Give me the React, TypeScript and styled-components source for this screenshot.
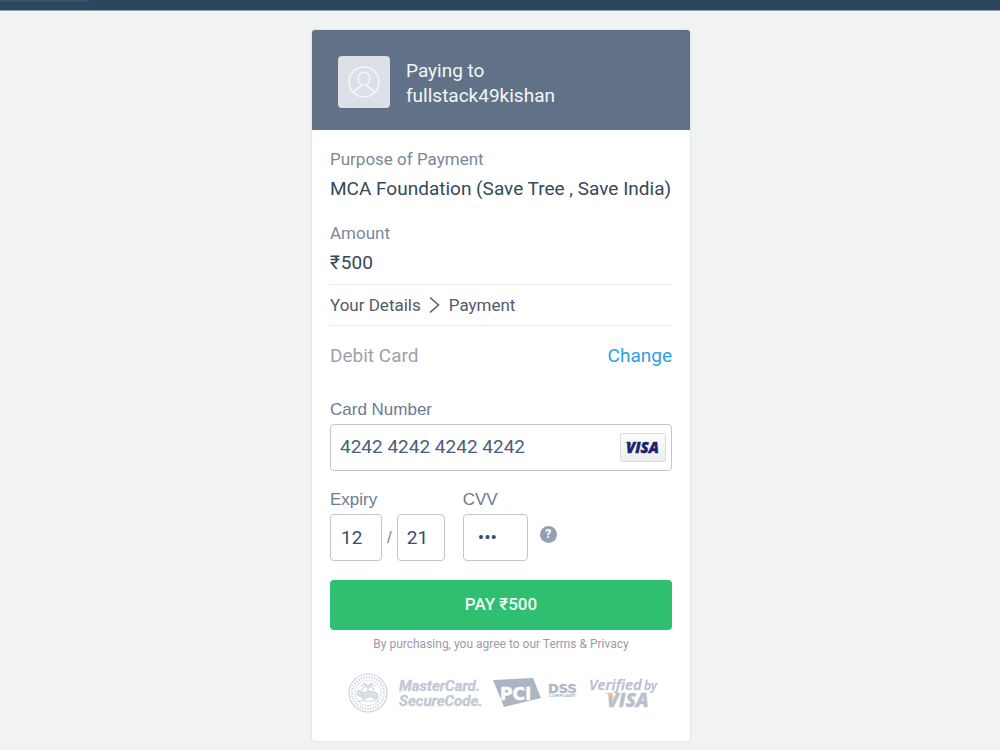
import React from "react";
import styled, { createGlobalStyle } from "styled-components";

const GlobalStyle = createGlobalStyle`
  * { box-sizing: border-box; }
  body {
    margin: 0;
    background: #f1f3f3;
    font-family: Roboto, "Liberation Sans", sans-serif;
    color: #33475b;
  }
`;

const TopBar = styled.header`
  height: 11px;
  background: #2d465d;
  border-bottom: 1px solid #8e9db0;
`;

const TopTab = styled.div`
  width: 90px;
  height: 2px;
  background: #35536c;
  border-radius: 0 0 2px 0;
`;

const Page = styled.main`
  display: flex;
  justify-content: center;
  padding: 19px 10px 8px 12px;
`;

const Card = styled.section`
  width: 100%;
  max-width: 378px;
  background: #fff;
  border-radius: 3px;
  box-shadow: 0 0 0 1px #dfe6f0;
`;

const Payee = styled.div`
  display: flex;
  align-items: center;
  gap: 16px;
  padding: 26px 26px 22px;
  background: #617288;
  border-radius: 3px 3px 0 0;
`;

const Avatar = styled.div`
  display: grid;
  place-items: center;
  width: 52px;
  height: 52px;
  background: #dcdfe5;
  border-radius: 4px;
`;

const PayeeName = styled.h1`
  margin: 0;
  padding-top: 2px;
  font-size: 19px;
  line-height: 25px;
  font-weight: 400;
  color: #f4f6f8;
`;

const Body = styled.form`
  display: flex;
  flex-direction: column;
  padding: 19px 18px 28px;
`;

const Summary = styled.dl`
  display: flex;
  flex-direction: column;
  gap: 22px;
  margin: 0;
  padding-bottom: 9px;
  border-bottom: 1px solid #eceff1;
`;

const Entry = styled.div`
  display: flex;
  flex-direction: column;
  gap: 8px;
`;

const Term = styled.dt`
  font-size: 17px;
  line-height: 20px;
  color: #7b8798;
`;

const Detail = styled.dd`
  margin: 0;
  font-size: 19px;
  line-height: 24px;
  color: #34495a;
`;

const Amount = styled(Detail)`
  display: flex;
  gap: 1px;
`;

const Steps = styled.nav`
  display: flex;
  align-items: center;
  gap: 7px;
  height: 41px;
  border-bottom: 1px solid #eceff1;
  font-size: 17px;
  line-height: 20px;
  color: #515a68;
`;

const Method = styled.div`
  display: flex;
  justify-content: space-between;
  margin: 18px 0 32px;
  font-size: 19px;
  line-height: 24px;
  color: #a09fae;
`;

const ChangeLink = styled.a`
  color: #2e9eea;
  text-decoration: none;
`;

const Field = styled.div`
  display: flex;
  flex-direction: column;
  gap: 4px;
`;

const Label = styled.label`
  font-family: "Liberation Sans", sans-serif;
  font-size: 17px;
  line-height: 20px;
  color: #6b7b91;
`;

const InputBox = styled.div`
  display: flex;
  align-items: center;
  height: 47px;
  padding-right: 5px;
  border: 1px solid #bcc6d6;
  border-radius: 4px;
`;

const CardInput = styled.input`
  flex: 1;
  min-width: 0;
  padding: 0 9px 2px;
  border: 0;
  outline: 0;
  background: none;
  font: 19px/24px Roboto, sans-serif;
  color: #48607a;
`;

const SmallInput = styled.input<{ $width: number; $inset: number }>`
  width: ${(p) => p.$width}px;
  height: 47px;
  padding: 0 0 1px ${(p) => p.$inset}px;
  border: 1px solid #bcc6d6;
  border-radius: 4px;
  outline: 0;
  background: #fff;
  font: 19px/24px Roboto, sans-serif;
  color: #34506a;
`;

const FieldRow = styled.div`
  display: flex;
  align-items: flex-end;
  margin: 19px 0 19px;
`;

const ExpiryInputs = styled.div`
  display: flex;
  align-items: center;
  gap: 5px;
  margin-right: 18px;
  font: 17px/20px "Liberation Sans", sans-serif;
  color: #7b8798;
`;

const HelpButton = styled.button`
  display: grid;
  place-items: center;
  width: 17px;
  height: 17px;
  margin: 0 0 18px 12px;
  padding: 0;
  border: 0;
  border-radius: 50%;
  background: #93a0b2;
  font: 700 12px/17px Roboto, sans-serif;
  color: #fff;
`;

const PayButton = styled.button`
  height: 50px;
  padding: 0 0 2px;
  border: 0;
  border-radius: 4px;
  background: #2fbf71;
  font: 500 17px/20px Roboto, sans-serif;
  color: #f2fbf6;
`;

const Terms = styled.p`
  margin: 6px 0 21px;
  font-size: 12px;
  line-height: 16px;
  text-align: center;
  color: #9b9aab;
`;

const Badges = styled.div`
  display: flex;
  align-items: center;
  justify-content: space-between;
  padding: 0 13px 0 18px;
`;

const AvatarIcon = () => (
  <svg width="32" height="32" viewBox="0 0 32 32" fill="none" stroke="#f6f8fa" strokeWidth="1.4">
    <circle cx="16" cy="16" r="15" />
    <ellipse cx="16" cy="12.8" rx="5.8" ry="6.6" />
    <path d="M5.500 26.500c1-3 5-4 8-6.800M26.500 26.500c-1-3-5-4-8-6.800" />
  </svg>
);

const Chevron = () => (
  <svg width="14" height="18" viewBox="0 0 14 18" fill="none" stroke="#515a68" strokeWidth="1.5">
    <path d="M2 1.500 10.500 9 2 16.500" />
  </svg>
);

const VisaMark = () => (
  <svg width="46" height="30" viewBox="0 0 46 30" role="img" aria-label="Visa">
    <defs>
      <linearGradient id="chip" x1="0" y1="0" x2="0" y2="1">
        <stop offset="0" stopColor="#fdfdfd" />
        <stop offset="1" stopColor="#eeeeee" />
      </linearGradient>
    </defs>
    <rect x=".5" y=".5" width="45" height="28" rx="1.500" fill="url(#chip)" stroke="#dddddd" />
    <text x="6" y="20" fontFamily="Open Sans, sans-serif" fontSize="15" fontWeight="800" fontStyle="italic" fill="#1d2170" stroke="#1d2170" strokeWidth=".4">
      VISA
    </text>
    <path d="M5 9h5l1.500 4C9.500 10.500 7.500 9.500 5 9.300z" fill="#1d2170" />
  </svg>
);

const BankSeal = () => (
  <svg width="40" height="40" viewBox="0 0 40 40" fill="none" stroke="#cdd3dc" role="img" aria-label="Reserve Bank seal">
    <circle cx="20" cy="20" r="19" strokeWidth="1.200" />
    <circle cx="20" cy="20" r="16" strokeWidth="2.400" strokeDasharray="1.200 1.500" />
    <circle cx="20" cy="20" r="13" strokeWidth=".7" />
    <path d="M20 22v-8M20 14c-2-3-5-3-7-1M20 14c2-3 5-3 7-1M20 14c-2-1-5 0-6 3M20 14c2-1 5 0 6 3M20 14c-1-2-2-3-4-4M20 14c1-2 2-3 4-4" strokeWidth="1.300" />
    <path d="M9 19c1-2 4-2 5 0l2 1c4-2 9-2 12 0 2 1 2 4 1 6h-3l-1-2h-6l-2 2h-3l1-3c-4 1-6-1-6-4z" fill="#dde1e8" strokeWidth="1.200" />
    <path d="M9 28h22M18 23h8M12 20h2" strokeWidth="1.200" />
  </svg>
);

const SecureCodeMark = () => (
  <svg width="84" height="36" viewBox="0 0 84 36" fill="#c1c8d4" stroke="#c1c8d4" strokeWidth=".3" fontFamily="Roboto, sans-serif" fontSize="15" fontWeight="700" fontStyle="italic">
    <text x="1" y="16">MasterCard.</text>
    <text x="1" y="31">SecureCode.</text>
  </svg>
);

const PciMark = () => (
  <svg width="86" height="32" viewBox="0 0 86 32">
    <path d="M0 3 40 1 48 21 11 30z" fill="#abb5c4" />
    <text x="7" y="23" fontFamily="DejaVu Sans, sans-serif" fontSize="17" fontWeight="700" fill="#fff" stroke="#fff" strokeWidth=".5">
      PCI
    </text>
    <g fill="#aeb8c6" fontFamily="DejaVu Sans, sans-serif" fontWeight="700">
      <text x="55" y="16" fontSize="13" stroke="#aeb8c6" strokeWidth=".4">DSS</text>
      <text x="56" y="20" fontSize="4">COMPLIANT</text>
    </g>
  </svg>
);

const VerifiedMark = () => (
  <svg width="70" height="38" viewBox="0 0 70 38" fontFamily="Open Sans, sans-serif" fontStyle="italic" fill="#b8c0cd" stroke="#b8c0cd" strokeWidth=".3">
    <text x="0" y="16" fontSize="15" fontWeight="600">Verified</text>
    <text x="55" y="16" fontSize="12" fontWeight="600">by</text>
    <text x="18" y="33" fontSize="19" fontWeight="800">VISA</text>
    <path d="M16 19h7l3 8c-3-4-5-7-10-7.500z" fill="#f3c877" stroke="none" />
  </svg>
);

export default function App() {
  return (
    <>
      <GlobalStyle />
      <TopBar>
        <TopTab />
      </TopBar>
      <Page>
        <Card>
          <Payee>
            <Avatar>
              <AvatarIcon />
            </Avatar>
            <PayeeName>
              Paying to
              <br />
              fullstack49kishan
            </PayeeName>
          </Payee>
          <Body onSubmit={(e) => e.preventDefault()}>
            <Summary>
              <Entry>
                <Term>Purpose of Payment</Term>
                <Detail>MCA Foundation (Save Tree , Save India)</Detail>
              </Entry>
              <Entry>
                <Term>Amount</Term>
                <Amount>
                  <span>₹</span>
                  <span>500</span>
                </Amount>
              </Entry>
            </Summary>
            <Steps aria-label="Progress">
              <span>Your Details</span>
              <Chevron />
              <span>Payment</span>
            </Steps>
            <Method>
              <span>Debit Card</span>
              <ChangeLink href="#change">Change</ChangeLink>
            </Method>
            <Field>
              <Label htmlFor="number">Card Number</Label>
              <InputBox>
                <CardInput id="number" inputMode="numeric" defaultValue="4242 4242 4242 4242" />
                <VisaMark />
              </InputBox>
            </Field>
            <FieldRow>
              <Field>
                <Label htmlFor="month">Expiry</Label>
                <ExpiryInputs>
                  <SmallInput id="month" $width={52} $inset={10} defaultValue="12" />
                  /
                  <SmallInput aria-label="Expiry year" $width={48} $inset={9} defaultValue="21" />
                </ExpiryInputs>
              </Field>
              <Field>
                <Label htmlFor="cvv">CVV</Label>
                <SmallInput id="cvv" type="password" $width={65} $inset={14} defaultValue="424" />
              </Field>
              <HelpButton type="button" aria-label="What is CVV?">
                ?
              </HelpButton>
            </FieldRow>
            <PayButton type="submit">PAY ₹500</PayButton>
            <Terms>By purchasing, you agree to our Terms &amp; Privacy</Terms>
            <Badges>
              <BankSeal />
              <SecureCodeMark />
              <PciMark />
              <VerifiedMark />
            </Badges>
          </Body>
        </Card>
      </Page>
    </>
  );
}
